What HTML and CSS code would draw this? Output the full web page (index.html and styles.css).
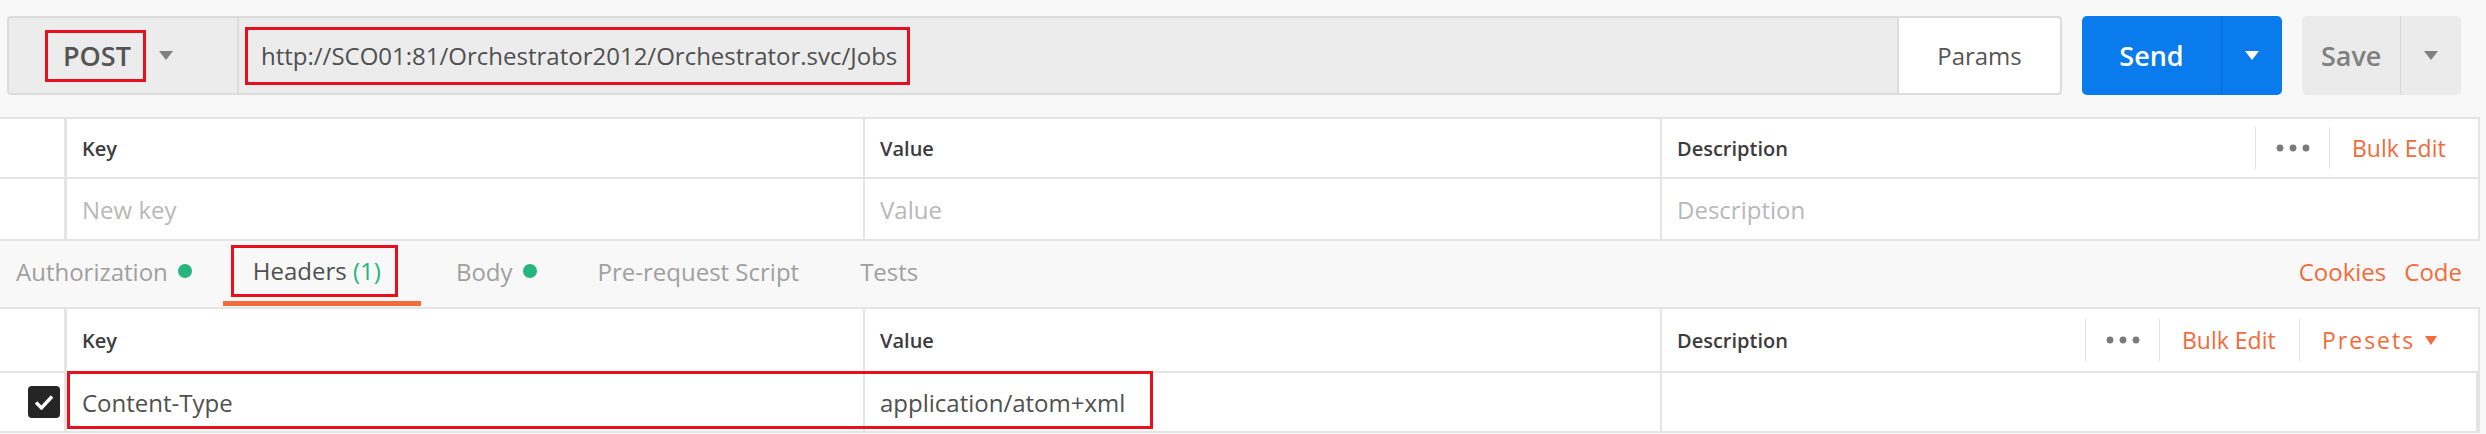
FILE: index.html
```html
<!doctype html>
<html>
<head>
<meta charset="utf-8">
<title>request</title>
<link rel="stylesheet" href="styles.css">
</head>

<body>
<div class="request_bar">
	<div class="url_group">
		<div class="method"><span class="method_name mark">POST</span><i class="caret"></i></div>
		<div class="url"><span class="url_text mark">http://SCO01:81/Orchestrator2012/Orchestrator.svc/Jobs</span></div>
		<div class="params">Params</div>
	</div>
	<div class="split send"><span class="split_main">Send</span><span class="split_drop"><i class="caret"></i></span></div>
	<div class="split save"><span class="split_main">Save</span><span class="split_drop"><i class="caret"></i></span></div>
</div>

<div class="kv_table params_table">
	<div class="kv_row kv_head">
		<div class="cell check"></div>
		<div class="cell">Key</div>
		<div class="cell">Value</div>
		<div class="cell desc">
			<span>Description</span>
			<span class="actions">
				<span class="act more"><svg width="34" height="8" viewBox="0 0 34 8"><circle cx="4" cy="4" r="3.4"/><circle cx="17" cy="4" r="3.4"/><circle cx="30" cy="4" r="3.4"/></svg></span>
				<span class="act link bulk">Bulk Edit</span>
			</span>
		</div>
	</div>
	<div class="kv_row">
		<div class="cell check"></div>
		<div class="cell placeholder">New key</div>
		<div class="cell placeholder">Value</div>
		<div class="cell placeholder">Description</div>
	</div>
</div>

<div class="tabs">
	<div class="tab">Authorization <i class="dot"></i></div>
	<div class="tab active"><span class="mark tab_mark">Headers <em>(1)</em></span></div>
	<div class="tab">Body <i class="dot"></i></div>
	<div class="tab">Pre-request Script</div>
	<div class="tab">Tests</div>
	<div class="tab_links"><span>Cookies</span><span>Code</span></div>
</div>

<div class="kv_table headers">
	<div class="kv_row kv_head">
		<div class="cell check"></div>
		<div class="cell">Key</div>
		<div class="cell">Value</div>
		<div class="cell desc">
			<span>Description</span>
			<span class="actions">
				<span class="act more"><svg width="34" height="8" viewBox="0 0 34 8"><circle cx="4" cy="4" r="3.4"/><circle cx="17" cy="4" r="3.4"/><circle cx="30" cy="4" r="3.4"/></svg></span>
				<span class="act link bulk">Bulk Edit</span>
				<span class="act link presets">Presets <i class="caret"></i></span>
			</span>
		</div>
	</div>
	<div class="kv_row filled">
		<div class="cell check"><span class="checkbox"><svg width="20" height="16" viewBox="0 0 20 16"><path d="M2 8.5l5.5 5.5L18 2.5" fill="none" stroke="#fff" stroke-width="3.4"/></svg></span></div>
		<div class="cell">Content-Type</div>
		<div class="cell">application/atom+xml</div>
		<div class="cell"></div>
		<span class="row_mark"></span>
	</div>
</div>
</body>
</html>
```

FILE: styles.css
```css
body {margin: 0; padding: 0; background: #f8f8f8; font-family: "Open Sans", "Liberation Sans", sans-serif; color: #505050;}
.mark {border: 3px solid #e8101c;}
.caret {display: inline-block; width: 0; height: 0; border-left: 7px solid transparent; border-right: 7px solid transparent; border-top: 9px solid #808080;}

.request_bar {display: flex; gap: 20px; padding: 16px 25px 0 7px; height: 79px;}
.url_group {flex: 1; display: flex; background: #ececec; border: 2px solid #dcdcdc; border-radius: 4px; box-sizing: border-box;}
.method {width: 230px; display: flex; align-items: center; gap: 13px; padding-left: 36px; box-sizing: border-box; border-right: 2px solid #dcdcdc;}
.method_name {font-size: 27px; font-weight: 600; color: #555; padding: 6px 12px 7px 15px; line-height: 33px;}
.url {flex: 1; display: flex; align-items: center; padding-left: 6px;}
.url_text {font-size: 24px; line-height: 30px; color: #505050; padding: 11px 10px 11px 13px;}
.params {width: 161px; background: #fff; border-left: 2px solid #dcdcdc; border-radius: 0 4px 4px 0; display: flex; align-items: center; justify-content: center; font-size: 24px; color: #555;}

.split {display: flex; border-radius: 5px; overflow: hidden;}
.split_main {display: flex; align-items: center; justify-content: center; font-size: 27px; font-weight: 600;}
.split_drop {width: 60px; display: flex; align-items: center; justify-content: center;}
.send {width: 200px; background: #097bed; color: #fff;}
.send .split_main {width: 139px; border-right: 1px solid #0668cc;}
.send .caret {border-top-color: #fff;}
.save {width: 159px; background: #ebebeb; color: #808080;}
.save .split_main {width: 99px; border-right: 1px solid #d6d6d6;}

.kv_table {width: 2480px; margin-top: 22px; border-top: 2px solid #e4e4e4; border-right: 2px solid #e4e4e4; box-sizing: border-box;}
.kv_row {display: grid; grid-template-columns: 67px 798px 797px 1fr; height: 62px; box-sizing: border-box; border-bottom: 2px solid #e4e4e4; background: #fff; position: relative;}
.params_table .kv_head {height: 60px;}
.headers .kv_head {height: 64px;}
.cell {display: flex; align-items: center; padding-left: 15px; font-size: 24px; color: #505050; border-right: 2px solid #e4e4e4;}
.cell:last-child {border-right: 0;}
.cell.check {padding-left: 0; border-right: 3px solid #e4e4e4;}
.kv_head .cell {font-size: 20px; font-weight: 600; color: #3c3c3c;}
.placeholder {color: #b8b8b8;}
.desc {justify-content: space-between; padding-right: 0;}
.kv_head .actions {display: flex; align-items: center; font-weight: 400; font-size: 23px;}
.act {display: flex; align-items: center; box-sizing: border-box; border-left: 1px solid #e2e2e2; height: 42px;}
.act.more {width: 74px; justify-content: center;}
.act.more svg {fill: #7a7a7a;}
.act.link {color: #f26b3a; padding-left: 22px;}
.act.bulk {width: 149px;}
.headers .act.bulk {width: 140px;}
.act.presets {width: 179px; padding-left: 22px; letter-spacing: 2px;}
.act.link .caret {border-top-color: #f26b3a; margin-left: 10px; border-left-width: 6px; border-right-width: 6px; border-top-width: 9px;}

.tabs {display: flex; align-items: center; height: 66px; padding-left: 16px; font-size: 24px; color: #a0a0a0;}
.tabs + .kv_table {margin-top: 0;}
.tab {display: flex; align-items: center; height: 100%; margin-right: 61px; position: relative; padding-bottom: 6px; box-sizing: border-box;}
.tab .dot {display: inline-block; width: 14px; height: 14px; border-radius: 50%; background: #26b47f; margin-left: 10px;}
.tab.active {color: #505050; margin-left: -30px; padding: 0 23px 6px 8px; margin-right: 35px;}
.tab.active::after {content: ""; position: absolute; left: 0; right: 0; bottom: 1px; height: 5px; background: #f26b3a;}
.tab_mark {padding: 9px 14px 9px 19px; line-height: 28px;}
.tab_mark em {font-style: normal; color: #26b47f;}
.tab_links {margin-left: auto; margin-right: 24px; display: flex; gap: 18px; color: #f26b3a; padding-bottom: 6px;}

.filled {height: 60px;}
.checkbox {width: 32px; height: 32px; background: #252525; border-radius: 4px; display: flex; align-items: center; justify-content: center; margin-left: 28px;}
.row_mark {position: absolute; left: 67px; top: -2px; width: 1086px; height: 58px; border: 3px solid #e8101c; box-sizing: border-box;}
```
